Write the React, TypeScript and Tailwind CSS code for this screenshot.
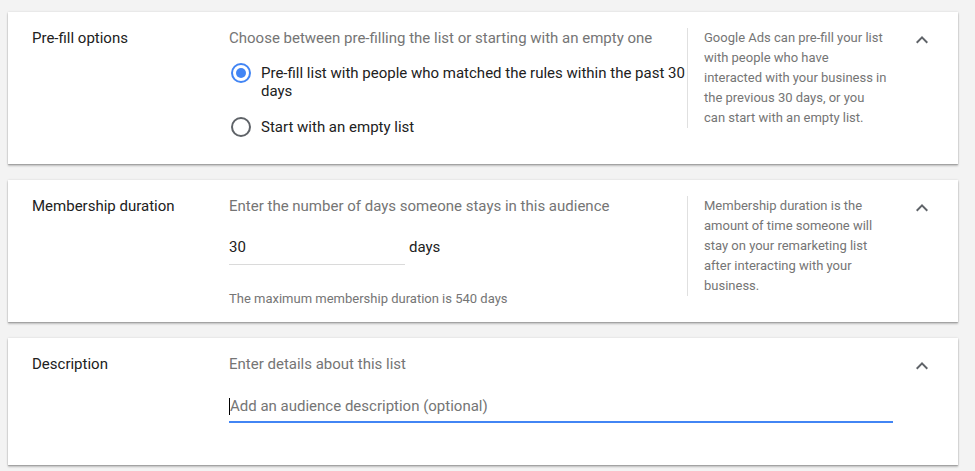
import React from "react";

const Chevron = () => (
  <svg width="24" height="24" viewBox="0 0 24 24" className="block">
    <path d="M12 8l-6 6 1.41 1.41L12 10.83l4.59 4.58L18 14z" fill="#5f6368" />
  </svg>
);

const Radio = ({ checked }: { checked: boolean }) =>
  checked ? (
    <div className="w-[20px] h-[20px] rounded-full border-2 border-[#4285f4] flex items-center justify-center shrink-0">
      <div className="w-[10px] h-[10px] rounded-full bg-[#4285f4]" />
    </div>
  ) : (
    <div className="w-[20px] h-[20px] rounded-full border-2 border-[#5f6368] shrink-0" />
  );

const Card = ({ children }: { children: React.ReactNode }) => (
  <div className="bg-white shadow-[0_1px_1px_0_rgba(0,0,0,0.14),0_2px_2px_0_rgba(0,0,0,0.2),0_0_2px_0_rgba(0,0,0,0.12)] flex items-start pl-[24px] pt-[16px]">
    {children}
  </div>
);

export default function App() {
  return (
    <div
      className="bg-[#f3f3f3] w-[975px] h-[471px] pl-[8px] pr-[17px] pt-[12px] flex flex-col gap-[16px] text-[#212121]"
      style={{ fontFamily: "Roboto, 'Liberation Sans', sans-serif" }}
    >
      {/* Card 1 */}
      <Card>
        <div className="w-[197px] text-[15px] leading-[20px]">Pre-fill options</div>
        <div className="w-[458px] pb-[28px]">
          <div className="text-[15px] leading-[20px] text-[#757575]">
            Choose between pre-filling the list or starting with an empty one
          </div>
          <div className="mt-[16px] flex items-start">
            <div className="pl-[2px] h-[18px] -mt-[1px]">
              <Radio checked />
            </div>
            <div className="ml-[10px] text-[15px] leading-[18px] w-[426px]">
              Pre-fill list with people who matched the rules within the past 30 days
            </div>
          </div>
          <div className="mt-[18px] flex items-start h-[18px]">
            <div className="pl-[2px] h-[18px] -mt-[1px]">
              <Radio checked={false} />
            </div>
            <div className="ml-[10px] text-[15px] leading-[18px]">Start with an empty list</div>
          </div>
        </div>
        <div className="w-[206px] border-l border-[#e0e0e0] pl-[16px] pr-[5px] text-[13px] leading-[20px] text-[#757575]">
          Google Ads can pre-fill your list with people who have interacted with your business in the previous 30 days, or you can start with an empty list.
        </div>
        <div className="ml-[17px]">
          <Chevron />
        </div>
      </Card>

      {/* Card 2 */}
      <Card>
        <div className="w-[197px] text-[15px] leading-[20px]">Membership duration</div>
        <div className="w-[458px] pb-[15px]">
          <div className="text-[15px] leading-[20px] text-[#757575]">
            Enter the number of days someone stays in this audience
          </div>
          <div className="mt-[14px] flex items-start">
            <div className="w-[176px] pt-[7px] pb-[7px] border-b border-[#dadada] text-[15px] leading-[20px]">30</div>
            <div className="ml-[4px] pt-[7px] text-[15px] leading-[20px]">days</div>
          </div>
          <div className="mt-[26px] text-[13px] leading-[16px] text-[#757575]">
            The maximum membership duration is 540 days
          </div>
        </div>
        <div className="w-[206px] border-l border-[#e0e0e0] pl-[16px] pr-[5px] text-[13px] leading-[20px] text-[#757575]">
          Membership duration is the amount of time someone will stay on your remarketing list after interacting with your business.
        </div>
        <div className="ml-[17px]">
          <Chevron />
        </div>
      </Card>

      {/* Card 3 */}
      <Card>
        <div className="w-[197px] text-[15px] leading-[20px]">Description</div>
        <div className="w-[664px] pb-[42px]">
          <div className="text-[15px] leading-[20px] text-[#757575]">Enter details about this list</div>
          <div className="mt-[14px] pt-[8px] pb-[5px] border-b-2 border-[#4285f4] flex items-center text-[15px] leading-[20px] text-[#757575]">
            <span className="inline-block w-[1px] h-[17px] bg-black" />
            Add an audience description (optional)
          </div>
        </div>
        <div className="ml-[17px]">
          <Chevron />
        </div>
      </Card>
    </div>
  );
}
